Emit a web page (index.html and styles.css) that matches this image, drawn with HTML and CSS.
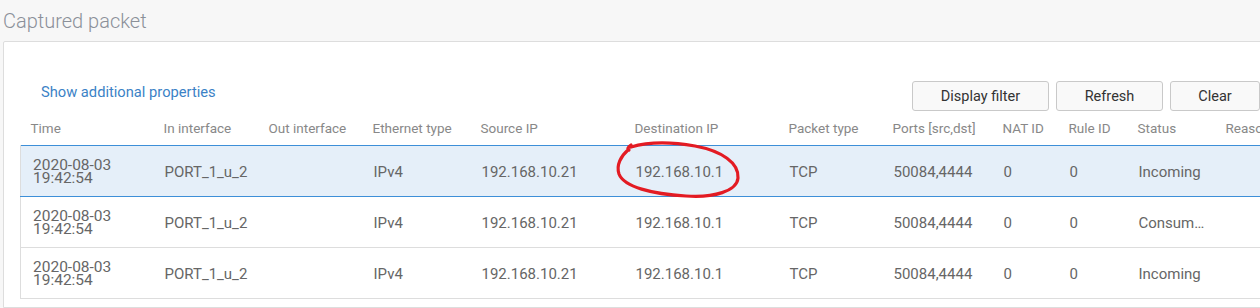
FILE: index.html
```html
<!DOCTYPE html>
<html lang="en">
<head>
    <meta charset="UTF-8">
    <title>Captured packet</title>
    <link rel="stylesheet" href="styles.css">
</head>
<body>
    <h2 class="page-title">Captured packet</h2>

    <div class="panel">
        <div class="toolbar">
            <a href="#" class="props-link">Show additional properties</a>
            <div class="buttons">
                <button class="btn btn-wide">Display filter</button>
                <button class="btn">Refresh</button>
                <button class="btn btn-narrow">Clear</button>
            </div>
        </div>

        <table class="packets">
            <colgroup>
                <col style="width: 133px">
                <col style="width: 105px">
                <col style="width: 104px">
                <col style="width: 108px">
                <col style="width: 154px">
                <col style="width: 154px">
                <col style="width: 104px">
                <col style="width: 110px">
                <col style="width: 66px">
                <col style="width: 69px">
                <col style="width: 88px">
                <col style="width: 120px">
            </colgroup>
            <thead>
                <tr>
                    <th>Time</th>
                    <th>In interface</th>
                    <th>Out interface</th>
                    <th>Ethernet type</th>
                    <th>Source IP</th>
                    <th>Destination IP</th>
                    <th>Packet type</th>
                    <th>Ports [src,dst]</th>
                    <th>NAT ID</th>
                    <th>Rule ID</th>
                    <th>Status</th>
                    <th>Reason</th>
                </tr>
            </thead>
            <tbody>
                <tr class="selected">
                    <td class="time">2020-08-03<br>19:42:54</td>
                    <td>PORT_1_u_2</td>
                    <td></td>
                    <td>IPv4</td>
                    <td>192.168.10.21</td>
                    <td>192.168.10.1</td>
                    <td>TCP</td>
                    <td>50084,4444</td>
                    <td>0</td>
                    <td>0</td>
                    <td>Incoming</td>
                    <td></td>
                </tr>
                <tr>
                    <td class="time">2020-08-03<br>19:42:54</td>
                    <td>PORT_1_u_2</td>
                    <td></td>
                    <td>IPv4</td>
                    <td>192.168.10.21</td>
                    <td>192.168.10.1</td>
                    <td>TCP</td>
                    <td>50084,4444</td>
                    <td>0</td>
                    <td>0</td>
                    <td>Consumed</td>
                    <td></td>
                </tr>
                <tr>
                    <td class="time">2020-08-03<br>19:42:54</td>
                    <td>PORT_1_u_2</td>
                    <td></td>
                    <td>IPv4</td>
                    <td>192.168.10.21</td>
                    <td>192.168.10.1</td>
                    <td>TCP</td>
                    <td>50084,4444</td>
                    <td>0</td>
                    <td>0</td>
                    <td>Incoming</td>
                    <td></td>
                </tr>
            </tbody>
        </table>
    </div>

    <!-- hand-drawn marker around the destination IP -->
    <svg class="marker" width="1260" height="308" viewBox="0 0 1260 308">
        <path d="M631,145 C628,147 627,149 629,150 M628,150 C621,156 616,165 619,174 C624,187 652,194 686,196 C714,198 737,191 738,178 C739,163 722,151 695,146 C672,142 648,142 631,147"
              fill="none" stroke="#e31b23" stroke-width="3.2" stroke-linecap="round"/>
    </svg>
</body>
</html>
```

FILE: styles.css
```css
* {
    margin: 0;
    padding: 0;
    box-sizing: border-box;
}

html, body {
    overflow: hidden;
}

body {
    font-family: Roboto, 'Liberation Sans', sans-serif;
    background: #f7f7f7;
    color: #666;
    position: relative;
    height: 308px;
}

.page-title {
    height: 41px;
    padding: 9px 0 0 3px;
    font-size: 20px;
    font-weight: 300;
    color: #8b9099;
}

.panel {
    margin-left: 3px;
    width: 1340px;
    background: #fff;
    border: 1px solid #ddd;
    border-radius: 2px 0 0 0;
    padding-top: 39px;
    height: 267px;
}

.toolbar {
    display: flex;
    align-items: center;
    width: 1256px;
    padding-left: 37px;
}

.props-link {
    color: #3b82c6;
    text-decoration: none;
    font-size: 14.7px;
    margin-top: -8px;
}

.buttons {
    margin-left: auto;
    display: flex;
    gap: 7px;
}

.btn {
    height: 30px;
    width: 107px;
    border: 1px solid #c9c9c9;
    border-radius: 3px;
    background: #f9f9f9;
    color: #333;
    font-family: inherit;
    font-size: 14.5px;
}

.btn-wide {
    width: 137px;
}

.btn-narrow {
    width: 90px;
}

.packets {
    margin-left: 16px;
    border-collapse: collapse;
    table-layout: fixed;
    width: 1315px;
}

.packets th {
    height: 34px;
    padding: 1px 0 0 10px;
    text-align: left;
    font-weight: 400;
    font-size: 13.5px;
    color: #888;
    white-space: nowrap;
    overflow: hidden;
}

.packets td {
    height: 51px;
    padding: 3px 10px 0 11px;
    font-size: 15px;
    color: #666;
    white-space: nowrap;
    overflow: hidden;
    text-overflow: ellipsis;
    border-bottom: 1px solid #ddd;
}

.packets td:first-child {
    border-left: 1px solid #ddd;
}

.packets td.time {
    font-size: 15.5px;
    line-height: 13px;
    padding-left: 12px;
}

.packets tr.selected td {
    background: #e5eff9;
    border-top: 1px solid #3d8fd8;
    border-bottom: 1px solid #3d8fd8;
}

.marker {
    position: absolute;
    left: 0;
    top: 0;
    pointer-events: none;
}
```
